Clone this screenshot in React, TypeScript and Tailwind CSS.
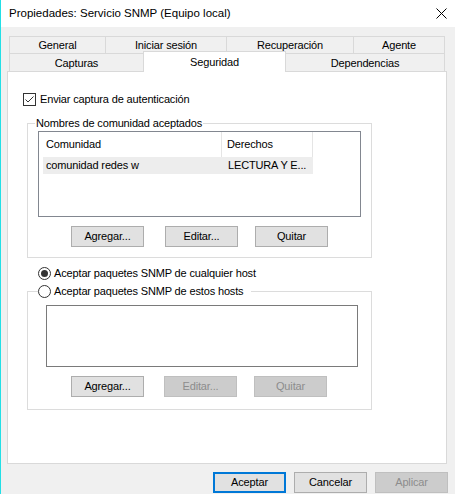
import React from "react";

const font = { fontFamily: "'Liberation Sans', Arial, sans-serif" };

function Btn({ label, w = "w-[73px]", disabled = false, primary = false, className = "" }: { label: string; w?: string; disabled?: boolean; primary?: boolean; className?: string }) {
  const base = "h-[21px] flex items-center justify-center text-[11px] tracking-[-0.15px] shrink-0 " + w + " " + className;
  if (disabled) return <div className={base + " bg-[#cccccc] border border-[#bfbfbf] text-[#8c8c8c]"}>{label}</div>;
  if (primary) return <div className={base + " bg-[#e1e1e1] border-2 border-[#0078d7] text-black"}>{label}</div>;
  return <div className={base + " bg-[#e1e1e1] border border-[#adadad] text-black"}>{label}</div>;
}

function Radio({ checked }: { checked: boolean }) {
  return (
    <svg width="13" height="13" viewBox="0 0 13 13" className="shrink-0">
      <circle cx="6.5" cy="6.5" r="6" fill="white" stroke="#333" strokeWidth="1" />
      {checked && <circle cx="6.5" cy="6.5" r="3.5" fill="#333" />}
    </svg>
  );
}

export default function App() {
  return (
    <div className="w-[455px] h-[494px] bg-[#f0f0f0] border-l border-[#22dfe6] flex flex-col text-black overflow-hidden tracking-[-0.15px]" style={font}>
      {/* title bar */}
      <div className="h-[27px] bg-white flex items-center justify-between pl-[8px] pr-[8px] shrink-0">
        <span className="text-[11.5px] leading-none tracking-normal">Propiedades: Servicio SNMP (Equipo local)</span>
        <svg width="11" height="11" viewBox="0 0 11 11">
          <path d="M0.5 0.5 L10.5 10.5 M10.5 0.5 L0.5 10.5" stroke="#000" strokeWidth="1" />
        </svg>
      </div>

      {/* tabs + panel */}
      <div className="ml-[6px] mt-[9px] w-[440px] flex flex-col">
        <div className="flex ml-[2px] h-[17px] text-[11px]">
          <div className="w-[96px] border-t border-l border-[#d9d9d9] flex items-center justify-center">General</div>
          <div className="w-[121px] border-t border-l border-[#d9d9d9] flex items-center justify-center">Iniciar sesión</div>
          <div className="w-[127px] border-t border-l border-[#d9d9d9] flex items-center justify-center">Recuperación</div>
          <div className="w-[92px] border-t border-l border-r border-[#d9d9d9] flex items-center justify-center">Agente</div>
        </div>
        <div className="flex ml-[2px] h-[18px] text-[11px]">
          <div className="w-[134px] border-t border-l border-[#d9d9d9] flex items-center justify-center pt-[1px]">Capturas</div>
          <div className="w-[143px] h-[21px] -mt-[2px] relative z-10 bg-white border-t border-l border-r border-[#d9d9d9] flex justify-center pt-[2px]">Seguridad</div>
          <div className="w-[159px] border-t border-r border-[#d9d9d9] flex items-center justify-center pt-[1px]">Dependencias</div>
        </div>
        <div className="h-[393px] bg-white border border-[#d9d9d9] flex flex-col">
          {/* checkbox */}
          <div className="flex items-center ml-[15px] mt-[21px] h-[13px] text-[11px]">
            <svg width="13" height="13" viewBox="0 0 13 13" className="shrink-0">
              <rect x="0.5" y="0.5" width="12" height="12" fill="white" stroke="#333" />
              <path d="M2.5 6.5 L5 9 L10.5 3.5" fill="none" stroke="#333" strokeWidth="1" />
            </svg>
            <span className="ml-[4px]">Enviar captura de autenticación</span>
          </div>

          {/* group 1 */}
          <div className="relative ml-[19px] mt-[17px] w-[345px] h-[135px] border border-[#dcdcdc] flex flex-col">
            <span className="absolute -top-[8px] left-[7px] bg-white px-[1px] text-[11px] leading-[14px]">Nombres de comunidad aceptados</span>
            <div className="ml-[10px] mt-[7px] w-[323px] h-[86px] border border-[#828790] flex flex-col text-[11px]">
              <div className="h-[25px] flex">
                <div className="w-[183px] border-r border-[#e5e5e5] flex items-center pl-[7px]">Comunidad</div>
                <div className="w-[91px] border-r border-[#e5e5e5] flex items-center pl-[5px]">Derechos</div>
              </div>
              <div className="h-[17px] flex ml-[4px] w-[270px] bg-[#ededed]">
                <div className="w-[179px] flex items-center pl-[3px]">comunidad redes w</div>
                <div className="flex items-center pl-[6px]">LECTURA Y E...</div>
              </div>
            </div>
            <div className="flex mt-[9px]">
              <Btn label="Agregar..." className="ml-[43px]" />
              <Btn label="Editar..." className="ml-[21px]" />
              <Btn label="Quitar" className="ml-[17px]" />
            </div>
          </div>

          {/* radio 1 */}
          <div className="flex items-center ml-[30px] mt-[9px] h-[13px] text-[11px]">
            <Radio checked />
            <span className="ml-[3px]">Aceptar paquetes SNMP de cualquier host</span>
          </div>

          {/* group 2 */}
          <div className="relative ml-[19px] mt-[11px] w-[345px] h-[119px] border border-[#dcdcdc] flex flex-col">
            <div className="absolute -top-[7px] left-[10px] bg-white flex items-center h-[13px] pr-[8px] text-[11px]">
              <Radio checked={false} />
              <span className="ml-[3px]">Aceptar paquetes SNMP de estos hosts</span>
            </div>
            <div className="ml-[18px] mt-[13px] w-[312px] h-[62px] border border-[#7a7a7a]"></div>
            <div className="flex mt-[9px]">
              <Btn label="Agregar..." className="ml-[43px]" />
              <Btn label="Editar..." disabled className="ml-[20px]" />
              <Btn label="Quitar" disabled className="ml-[17px]" />
            </div>
          </div>
        </div>
      </div>

      {/* bottom buttons */}
      <div className="flex justify-end gap-[8px] pr-[7px] mt-[8px]">
        <Btn label="Aceptar" primary />
        <Btn label="Cancelar" />
        <Btn label="Aplicar" disabled />
      </div>
    </div>
  );
}
